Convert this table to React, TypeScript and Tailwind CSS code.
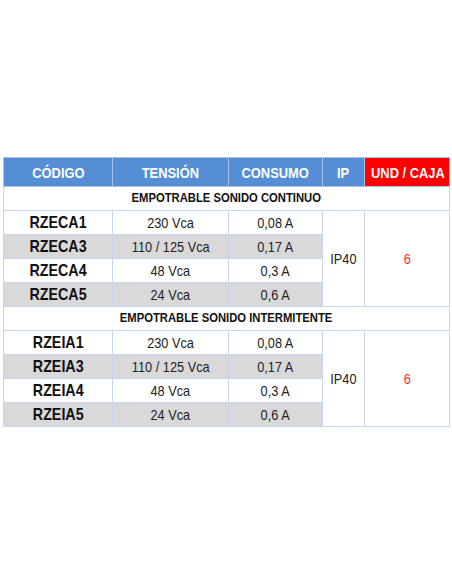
import React from "react";

type Row = { code: string; v: string; a: string };

const sec1: Row[] = [
  { code: "RZECA1", v: "230 Vca", a: "0,08 A" },
  { code: "RZECA3", v: "110 / 125 Vca", a: "0,17 A" },
  { code: "RZECA4", v: "48 Vca", a: "0,3 A" },
  { code: "RZECA5", v: "24 Vca", a: "0,6 A" },
];
const sec2: Row[] = [
  { code: "RZEIA1", v: "230 Vca", a: "0,08 A" },
  { code: "RZEIA3", v: "110 / 125 Vca", a: "0,17 A" },
  { code: "RZEIA4", v: "48 Vca", a: "0,3 A" },
  { code: "RZEIA5", v: "24 Vca", a: "0,6 A" },
];

const bd = "border border-[#c4d5ec] text-center p-0 leading-none";

function Section({ title, rows }: { title: string; rows: Row[] }) {
  return (
    <>
      <tr className="h-[24px]">
        <td colSpan={5} className={`${bd} text-[12.5px]`}>
          <span className="inline-block scale-x-[0.9] font-bold text-[#111] whitespace-nowrap">
            {title}
          </span>
        </td>
      </tr>
      {rows.map((r, i) => {
        const bg = i % 2 === 1 ? "bg-[#d9d9d9]" : "bg-white";
        return (
          <tr key={r.code} className="h-[24px]">
            <td className={`${bd} ${bg} text-[17px]`}>
              <span className="inline-block scale-x-[0.84] font-bold text-[#111]">{r.code}</span>
            </td>
            <td className={`${bd} ${bg} text-[15px]`}>
              <span className="inline-block scale-x-[0.85] text-[#222] whitespace-nowrap">{r.v}</span>
            </td>
            <td className={`${bd} ${bg} text-[15px]`}>
              <span className="inline-block scale-x-[0.85] text-[#222]">{r.a}</span>
            </td>
            {i === 0 && (
              <>
                <td rowSpan={4} className={`${bd} bg-white text-[15px]`}>
                  <span className="inline-block scale-x-[0.85] text-[#222]">IP40</span>
                </td>
                <td rowSpan={4} className={`${bd} bg-white text-[15px]`}>
                  <span className="inline-block scale-x-[0.85] text-[#ff2a2a]">6</span>
                </td>
              </>
            )}
          </tr>
        );
      })}
    </>
  );
}

export default function App() {
  return (
    <div
      className="w-[452px] h-[584px] bg-white pt-[157px] pl-[3px] leading-none"
      style={{ fontFamily: '"Liberation Sans", Arial, sans-serif' }}
    >
      <table className="table-fixed border-collapse w-[446px] leading-none">
        <colgroup>
          <col className="w-[109px]" />
          <col className="w-[116px]" />
          <col className="w-[94px]" />
          <col className="w-[42px]" />
          <col className="w-[85px]" />
        </colgroup>
        <thead>
          <tr className="h-[29px]">
            {["CÓDIGO", "TENSIÓN", "CONSUMO", "IP"].map((h) => (
              <th
                key={h}
                className="border border-[#a9c3e8] bg-[#558ed5] text-center p-0 font-bold text-[15px] leading-none"
              >
                <span className="inline-block scale-x-[0.86] text-white">{h}</span>
              </th>
            ))}
            <th className="border border-[#a9c3e8] bg-[#ff0000] text-center p-0 font-bold text-[15px] leading-none">
              <span className="inline-block scale-x-[0.86] text-white whitespace-nowrap">UND / CAJA</span>
            </th>
          </tr>
        </thead>
        <tbody>
          <Section title="EMPOTRABLE SONIDO CONTINUO" rows={sec1} />
          <Section title="EMPOTRABLE SONIDO INTERMITENTE" rows={sec2} />
        </tbody>
      </table>
    </div>
  );
}
